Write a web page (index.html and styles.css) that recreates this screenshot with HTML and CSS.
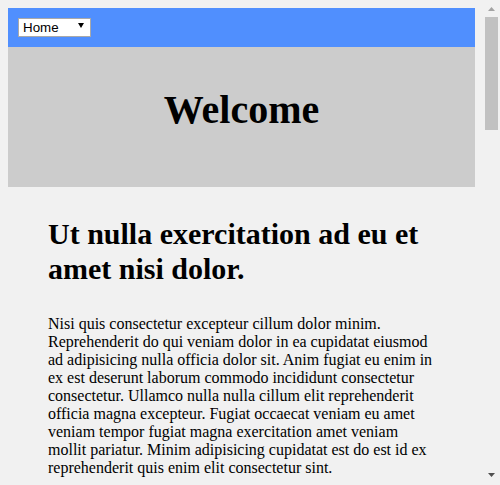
FILE: index.html
```html
<!DOCTYPE html>
<html lang="en">
<head>
<meta charset="utf-8">
<title>Welcome</title>
<link rel="stylesheet" href="styles.css">
</head>
<body>
<div class="page">
  <header class="topbar">
    <div class="select-wrap">
      <select class="nav-select" aria-label="Navigation">
        <option>Home</option>
        <option>About</option>
        <option>Contact</option>
      </select>
      <span class="select-arrow"></span>
    </div>
  </header>
  <section class="hero">
    <h1 class="hero-title">Welcome</h1>
  </section>
  <main class="content">
    <article class="post">
      <h2 class="post-title">Ut nulla exercitation ad eu et amet nisi dolor.</h2>
      <p class="post-text">Nisi quis consectetur excepteur cillum dolor minim. Reprehenderit do qui veniam dolor in ea cupidatat eiusmod ad adipisicing nulla officia dolor sit. Anim fugiat eu enim in ex est deserunt laborum commodo incididunt consectetur consectetur. Ullamco nulla nulla cillum elit reprehenderit officia magna excepteur. Fugiat occaecat veniam eu amet veniam tempor fugiat magna exercitation amet veniam mollit pariatur. Minim adipisicing cupidatat est do est id ex reprehenderit quis enim elit consectetur sint.</p>
    </article>
  </main>
</div>
<div class="scrollbar" aria-hidden="true">
  <div class="scroll-btn">
    <svg class="scroll-arrow" width="7" height="4" viewBox="0 0 7 4"><polygon points="0,4 3.5,0 7,4" fill="#a3a3a3"/></svg>
  </div>
  <div class="scroll-track">
    <div class="scroll-thumb"></div>
  </div>
  <div class="scroll-btn scroll-btn-down">
    <svg class="scroll-arrow" width="7" height="4" viewBox="0 0 7 4"><polygon points="0,0 7,0 3.5,4" fill="#505050"/></svg>
  </div>
</div>
</body>
</html>
```
FILE: styles.css
```css
html {
  background: #f1f1f1;
}

body {
  display: flex;
  height: 100vh;
  margin: 0;
  overflow: hidden;
  background: #f1f1f1;
  color: #000;
  font-family: "Liberation Serif", "Times New Roman", serif;
}

.page {
  flex: 1;
  min-width: 0;
  padding: 8px;
  overflow: hidden;
}

.scrollbar {
  display: flex;
  flex-direction: column;
  width: 17px;
  height: 100%;
  background: #f1f1f1;
}

.scroll-btn {
  display: flex;
  justify-content: center;
  height: 17px;
  padding-top: 7px;
  box-sizing: border-box;
}

.scroll-btn-down {
  padding-top: 5px;
}

.scroll-arrow {
  display: block;
}

.scroll-track {
  flex: 1;
  padding: 0 2px;
}

.scroll-thumb {
  height: 113px;
  background: #c1c1c1;
}

.topbar {
  display: flex;
  align-items: center;
  padding: 10px;
  background: #508ffe;
}

.select-wrap {
  position: relative;
  display: inline-block;
}

.nav-select {
  -webkit-appearance: none;
  appearance: none;
  display: block;
  box-sizing: border-box;
  width: 73px;
  height: 19px;
  margin: 0;
  padding: 0 0 0 4px;
  border: 1px solid #a9a9a9;
  border-radius: 0;
  background: #fff;
  color: #000;
  font-family: "Liberation Sans", Arial, sans-serif;
  font-size: 13.33px;
  line-height: 17px;
  outline: none;
}

.select-arrow {
  position: absolute;
  top: 5px;
  left: 60px;
  width: 0;
  height: 0;
  border-left: 3px solid transparent;
  border-right: 3px solid transparent;
  border-top: 5px solid #000;
  pointer-events: none;
}

.hero {
  padding: 40px 0 54px;
  background: #cccccc;
  text-align: center;
}

.hero-title {
  margin: 0;
  font-size: 40px;
  line-height: 46px;
  font-weight: bold;
}

.post {
  padding: 29px 40px 0;
}

.post-title {
  margin: 0;
  font-size: 30px;
  line-height: 35px;
  font-weight: bold;
}

.post-text {
  margin: 29px 0 0;
  font-size: 16px;
  line-height: 18px;
}
```
